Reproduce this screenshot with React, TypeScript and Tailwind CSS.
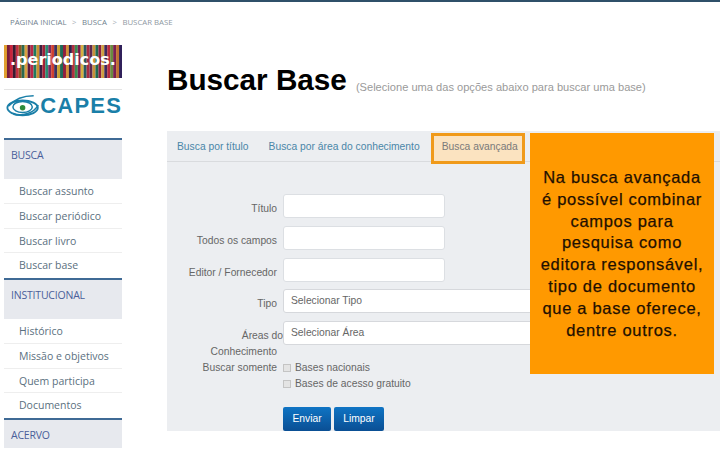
const stripes = [
  '#e0a030', '#7a1c3c', '#c8243c', '#3a1a30', '#c03040', '#8a5a20', '#2a6a50', '#d8a040', '#5a1a40', '#b82848',
  '#1f7a60', '#c89030', '#3a2040', '#a02038', '#2a8a70', '#7a2a60', '#d04030', '#403060', '#c8a030', '#1f6a58',
  '#902040', '#d09038', '#30204a', '#b03040', '#3a8a50', '#7a1c4c', '#d8b040', '#2a5a60', '#a82a40', '#5a2a50',
  '#c89038', '#206a50', '#8a2040', '#d0a040', '#402a58', '#b82a3c', '#6a8a40', '#7a2050', '#c07030', '#30205a',
];

const sidebarGroups = [
  { title: 'BUSCA', tall: true, items: ['Buscar assunto', 'Buscar periódico', 'Buscar livro', 'Buscar base'] },
  { title: 'INSTITUCIONAL', tall: true, items: ['Histórico', 'Missão e objetivos', 'Quem participa', 'Documentos'] },
  { title: 'ACERVO', tall: false, items: [] },
];

function PeriodicosLogo() {
  return (
    <div className="relative h-[33px] w-[118px] overflow-hidden">
      <svg width="118" height="33" viewBox="0 0 118 33" className="block">
        {stripes.map((color, i) => (
          <rect key={i} x={i * 2.95} y="0" width="3" height="33" fill={color} />
        ))}
      </svg>
      <span className="absolute left-[6px] top-[5px] whitespace-nowrap text-[16px] leading-[20px] font-bold text-white font-['DejaVu_Sans',sans-serif]">
        .periodicos.
      </span>
    </div>
  );
}

function CapesLogo() {
  return (
    <div className="flex h-[26px] items-center gap-[1px] pl-[2px]">
      <svg width="36" height="24" viewBox="0 0 36 24" fill="none">
        <ellipse cx="18" cy="14" rx="16.5" ry="8" stroke="#1a7fa8" strokeWidth="2" />
        <ellipse cx="18" cy="13" rx="10.5" ry="6" stroke="#1a7fa8" strokeWidth="1.6" />
        <path d="M3 12 C10 4 20 1 30 1" stroke="#1a7fa8" strokeWidth="1.6" />
        <path d="M8 21 C18 23 30 20 35 11" stroke="#1a7fa8" strokeWidth="1.6" />
        <circle cx="18" cy="14" r="3" fill="#2e8b3a" />
      </svg>
      <span className="text-[22px] leading-[26px] font-bold tracking-[1.2px] text-[#1a7fa8] font-['Liberation_Sans',sans-serif]">
        CAPES
      </span>
    </div>
  );
}

function Sidebar() {
  return (
    <aside className="ml-1 w-[118px] shrink-0 font-['Open_Sans',sans-serif]">
      <div className="mt-[43px]">
        <PeriodicosLogo />
      </div>
      <div className="mt-[11px] border-t border-[#e4e4e4] pt-[3px]">
        <CapesLogo />
      </div>
      <div className="mt-[19px]">
        {sidebarGroups.map((group) => (
          <div key={group.title}>
            <div
              className={`border-t-[2px] border-[#3f6a95] bg-[#e7e9ee] pl-[7px] pt-[8px] text-[10.5px] leading-[14px] tracking-[-0.2px] text-[#4a5f9a] ${
                group.tall ? 'h-[41px]' : 'h-[30px]'
              }`}
            >
              {group.title}
            </div>
            {group.items.length > 0 && (
              <ul>
                {group.items.map((item, i) => (
                  <li
                    key={item}
                    className={`h-[24.75px] pl-[15px] text-[10.5px] leading-[24px] text-[#5b7080] ${
                      i < group.items.length - 1 ? 'border-b border-[#eeeeee]' : ''
                    }`}
                  >
                    {item}
                  </li>
                ))}
              </ul>
            )}
          </div>
        ))}
      </div>
    </aside>
  );
}

function FieldLabel({ children }: { children: React.ReactNode }) {
  return <div className="w-[116px] shrink-0 pr-[6px] text-right text-[10.3px] leading-[16px] text-[#666666]">{children}</div>;
}

function TextRow({ label, gap }: { label: string; gap: string }) {
  return (
    <div className={`flex ${gap}`}>
      <div className="pt-[7px]">
        <FieldLabel>{label}</FieldLabel>
      </div>
      <div className="h-[24px] w-[162px] rounded-[3px] border border-[#dcdfe3] bg-white" />
    </div>
  );
}

function SelectBox({ text }: { text: string }) {
  return (
    <div className="h-[24px] w-[300px] rounded-[3px] border border-[#d6d8dc] bg-white pl-[7px] text-[10.3px] leading-[22px] text-[#666666]">
      {text}
    </div>
  );
}

function Panel() {
  return (
    <div className="mt-[32px] h-[300px] bg-[#eceef1] font-['Liberation_Sans',sans-serif]">
      <div className="flex h-[31px] items-start border-b border-[#d9dbde] pl-[10px] text-[10.3px] text-[#4a86a8]">
        <span className="pt-[9px] leading-[13px]">Busca por título</span>
        <span className="ml-[20px] pt-[9px] leading-[13px]">Busca por área do conhecimento</span>
        <span className="relative z-10 ml-[11px] mt-[2px] h-[31px] w-[94px] border-[3px] border-[#f09a1a] bg-[#fbe3c0] pl-[8px] pt-[4px] leading-[13px] text-[#7a7a7a]">
          Busca avançada
        </span>
      </div>
      <div className="pt-[32px]">
        <TextRow label="Título" gap="mb-[8px]" />
        <TextRow label="Todos os campos" gap="mb-[8px]" />
        <TextRow label="Editor / Fornecedor" gap="mb-[7px]" />
        <div className="mb-[8px] flex">
          <div className="pt-[7px]">
            <FieldLabel>Tipo</FieldLabel>
          </div>
          <SelectBox text="Selecionar Tipo" />
        </div>
        <div className="flex h-[24px] items-start">
          <div className="w-[116px] shrink-0 pt-[7px] text-right text-[10.3px] leading-[16px] text-[#666666]">
            Áreas do
            <div className="pr-[6px]">Conhecimento</div>
          </div>
          <SelectBox text="Selecionar Área" />
        </div>
        <div className="mt-[15px] flex">
          <FieldLabel>Buscar somente</FieldLabel>
          <div className="text-[10.3px] leading-[16px] text-[#666666]">
            <div className="flex items-center gap-[4px]">
              <span className="h-[8px] w-[8px] border border-[#c4c4c4] bg-[#e4e4e4]" />
              Bases nacionais
            </div>
            <div className="flex items-center gap-[4px]">
              <span className="h-[8px] w-[8px] border border-[#c4c4c4] bg-[#e4e4e4]" />
              Bases de acesso gratuito
            </div>
          </div>
        </div>
        <div className="ml-[116px] mt-[15px] flex gap-[3px] text-[10.3px] text-white">
          <div className="flex h-[24px] w-[48px] items-center justify-center rounded-[2px] bg-gradient-to-b from-[#0f74c4] to-[#0a4f94]">
            Enviar
          </div>
          <div className="flex h-[24px] w-[50px] items-center justify-center rounded-[2px] bg-gradient-to-b from-[#0f74c4] to-[#0a4f94]">
            Limpar
          </div>
        </div>
      </div>
    </div>
  );
}

export default function App() {
  return (
    <div className="relative h-[450px] w-[720px] overflow-hidden bg-white">
      <div className="h-[2px] bg-[#2f5069]" />
      <div className="flex">
        <Sidebar />
        <main className="ml-[45px] min-w-0 flex-1">
          <div className="mt-[59px] flex h-[38px] items-center">
            <h1 className="whitespace-nowrap text-[29.7px] leading-[38px] font-bold text-black font-['Liberation_Sans',sans-serif]">Buscar Base</h1>
            <span className="ml-[9px] mt-[15px] whitespace-nowrap text-[11.1px] text-[#9a9a9a] font-['Liberation_Sans',sans-serif]">
              (Selecione uma das opções abaixo para buscar uma base)
            </span>
          </div>
          <Panel />
        </main>
      </div>

      {/* breadcrumb */}
      <div className="absolute left-[10px] top-[16px] flex gap-[5.5px] text-[7.8px] leading-[12px] text-[#6f7f8e] font-['Open_Sans',sans-serif]">
        <span>PÁGINA INICIAL</span>
        <span className="text-[#a8b0b8]">&gt;</span>
        <span>BUSCA</span>
        <span className="text-[#a8b0b8]">&gt;</span>
        <span className="text-[#8f99a3]">BUSCAR BASE</span>
      </div>

      {/* callout */}
      <div className="absolute left-[530px] top-[133px] h-[241px] w-[184px] whitespace-nowrap bg-[#ff9900] pt-[34px] text-center text-[16.5px] leading-[21.8px] tracking-[0.7px] text-[#1f1000] [-webkit-text-stroke:0.25px_#1f1000] font-['Liberation_Sans',sans-serif]">
        Na busca avançada
        <br />é possível combinar
        <br />campos para
        <br />pesquisa como
        <br />editora responsável,
        <br />tipo de documento
        <br />que a base oferece,
        <br />dentre outros.
      </div>
    </div>
  );
}
